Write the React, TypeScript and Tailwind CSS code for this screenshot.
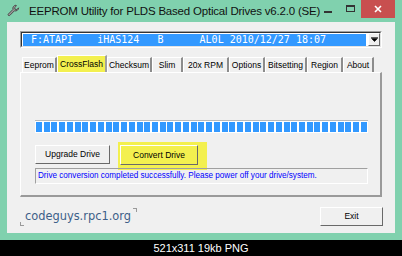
import React from "react";

const tabs = [
    { label: "Eeprom", w: "w-[35px]" },
    { label: "CrossFlash", w: "w-[50px]" },
    { label: "Checksum", w: "w-[45px]" },
    { label: "Slim", w: "w-[31px]" },
    { label: "20x RPM", w: "w-[46px]" },
    { label: "Options", w: "w-[36px]" },
    { label: "Bitsetting", w: "w-[42px]" },
    { label: "Region", w: "w-[36px]" },
    { label: "About", w: "w-[31px]" },
];

const ui = { fontFamily: '"Liberation Sans", Arial, sans-serif' };

const ClassicButton = ({ children, className = "" }: { children: React.ReactNode; className?: string }) => (
    <div
        className={`flex items-center justify-center border border-t-white border-l-white border-r-[#696969] border-b-[#696969] text-[8.5px] text-black ${className}`}
        style={ui}
    >
        {children}
    </div>
);

const App = () => {
    return (
        <div className="w-[402px] h-[256px] bg-black flex flex-col overflow-hidden">
            {/* window */}
            <div className="h-[240px] bg-[#80d1ae] flex flex-col">
                {/* title bar */}
                <div className="h-[22px] flex items-start relative">
                    <svg className="ml-[7px] mt-[4px] shrink-0" width="13" height="13" viewBox="0 0 13 13">
                        <path
                            d="M9 1.2a3.2 3.2 0 0 0-3 4.2L1.3 10.1a1 1 0 0 0 1.4 1.4l4.7-4.7a3.2 3.2 0 0 0 4.2-3L9.8 5.6 8.1 5.3 7.7 3.6 9.5 1.8Z"
                            fill="#9a9a9a"
                            stroke="#4a4a4a"
                            strokeWidth="1"
                        />
                    </svg>
                    <span className="ml-[9px] mt-[5px] text-[11.5px] leading-[13px] text-[#111] whitespace-nowrap tracking-[-0.2px]" style={ui}>
                        EEPROM Utility for PLDS Based Optical Drives v6.2.0 (SE)
                    </span>
                    <div className="flex-1" />
                    <div className="w-[8px] h-[2px] bg-[#333] mt-[11px] mr-[14px] shrink-0" />
                    <div className="w-[9px] h-[7px] border border-[#333] border-t-2 mt-[5px] mr-[6px] shrink-0" />
                    <div className="w-[34px] h-[18px] bg-[#c84f4f] flex items-center justify-center mr-[7px] shrink-0">
                        <svg width="8" height="8" viewBox="0 0 8 8">
                            <path d="M1 1L7 7M7 1L1 7" stroke="white" strokeWidth="1.6" />
                        </svg>
                    </div>
                </div>
                {/* client */}
                <div className="flex-1 mx-[7px] mb-[7px] bg-[#f0f0f0] flex flex-col pl-[13px] pr-[12px] pt-[9px]">
                    {/* combobox */}
                    <div className="w-[362px] h-[17px] border border-t-[#a0a0a0] border-l-[#a0a0a0] border-r-white border-b-white">
                        <div className="w-full h-full border border-t-[#333] border-l-[#333] border-r-[#e3e3e3] border-b-[#e3e3e3] bg-white flex items-center">
                            <div className="h-[12px] w-[343px] ml-[1px] bg-[#3399ff] flex items-center">
                                <pre className="text-white text-[10px] leading-[12px] ml-[8px]" style={{ fontFamily: '"DejaVu Sans Mono", "Liberation Mono", monospace' }}>
                                    {"F:ATAPI    iHAS124   B      AL0L 2010/12/27 18:07"}
                                </pre>
                            </div>
                            <div className="flex-1" />
                            <div className="w-[12px] h-[13px] border border-t-white border-l-white border-r-[#696969] border-b-[#696969] bg-[#f0f0f0] flex items-center justify-center">
                                <svg width="7" height="5" viewBox="0 0 7 5">
                                    <path d="M0 0.5H7M0.5 1.5H6.5L3.5 4.5Z" fill="#000" stroke="#000" strokeWidth="0.6" />
                                </svg>
                            </div>
                        </div>
                    </div>

                    {/* tabs */}
                    <div className="flex items-end h-[17px] mt-[7px] pl-[2px]">
                        {tabs.map((t) => {
                            const active = t.label === "CrossFlash";
                            return (
                                <div
                                    key={t.label}
                                    className={`${t.w} flex items-center justify-center border-t border-l border-t-white border-l-white border-r-2 border-r-[#8c8c8c] text-[8.5px] text-black ${active ? "h-[17px] bg-[#f3f04f] border-r-[#a0a0a0]" : "h-[15px]"}`}
                                    style={ui}
                                >
                                    {t.label}
                                </div>
                            );
                        })}
                    </div>

                    {/* panel */}
                    <div className="w-[362px] h-[125px] border-l border-t border-l-white border-t-white border-r-2 border-b-2 border-r-[#9a9a9a] border-b-[#9a9a9a] flex flex-col pl-[14px] pt-[47px]">
                        <div className="w-[333px] h-[13px] border-t border-t-[#b9b9b9] bg-white flex justify-between items-stretch px-[1px] py-[1px]">
                            {Array.from({ length: 43 }).map((_, i) => (
                                <div key={i} className="w-[6px] bg-[#3399ff]" />
                            ))}
                        </div>
                        <div className="flex items-start mt-[12px]">
                            <ClassicButton className="w-[75px] h-[19px] bg-[#f0f0f0]">Upgrade Drive</ClassicButton>
                            <div className="ml-[8px] -mt-[3px] w-[89px] h-[28px] bg-[#f3f04f] pl-[2px] pt-[3px]">
                                <ClassicButton className="w-[78px] h-[20px] bg-[#f3f04f]">Convert Drive</ClassicButton>
                            </div>
                        </div>
                        <div className="w-[333px] h-[16px] mt-[-2px] border border-t-[#a0a0a0] border-l-[#a0a0a0] border-r-white border-b-white flex items-center pl-[2px]">
                            <span className="text-[8.15px] text-[#0000ff] whitespace-nowrap" style={ui}>
                                Drive conversion completed successfully. Please power off your drive/system.
                            </span>
                        </div>
                    </div>

                    {/* footer */}
                    <div className="flex items-center justify-between mt-[10px]">
                        <div className="relative w-[117px] h-[18px] flex items-center pl-[5px]">
                            <div className="absolute right-0 top-0 w-[4px] h-[4px] border-t border-r border-[#9a9a9a]" />
                            <div className="absolute left-0 bottom-0 w-[4px] h-[4px] border-b border-l border-[#9a9a9a]" />
                            <span className="text-[11.4px] text-[#3d6088] whitespace-nowrap" style={{ fontFamily: '"DejaVu Sans", Verdana, sans-serif' }}>
                                codeguys.rpc1.org
                            </span>
                        </div>
                        <ClassicButton className="w-[63px] h-[19px] bg-[#f0f0f0]">Exit</ClassicButton>
                    </div>
                </div>
            </div>
            {/* image info bar */}
            <div className="h-[16px] flex items-center justify-center">
                <span className="text-white text-[11px] leading-[12px]" style={ui}>
                    521x311 19kb PNG
                </span>
            </div>
        </div>
    );
};

export default App;
